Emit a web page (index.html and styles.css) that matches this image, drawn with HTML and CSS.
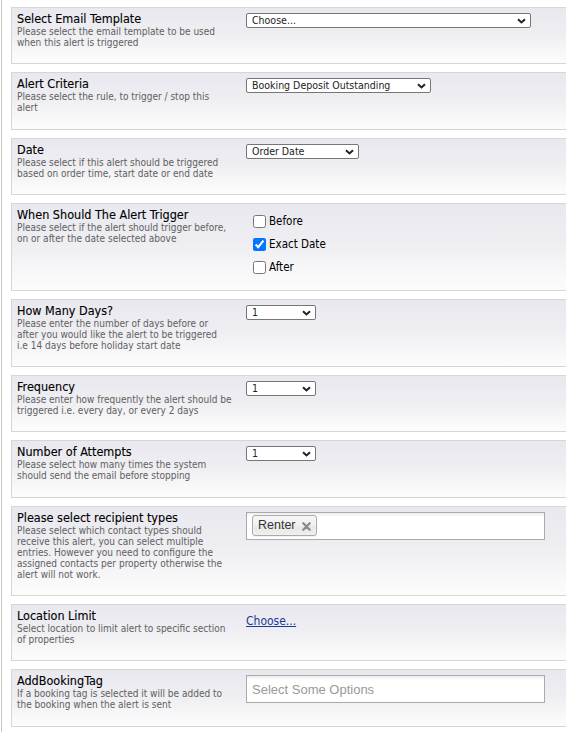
FILE: index.html
```html
<!DOCTYPE html>
<html lang="en">
<head>
<meta charset="utf-8">
<title>Alert Settings</title>
<link rel="stylesheet" href="styles.css">
</head>
<body>
<div class="page">

  <div class="row">
    <div class="info">
      <div class="title">Select Email Template</div>
      <div class="desc">Please select the email template to be used<br>when this alert is triggered</div>
    </div>
    <div class="field">
      <span class="select sel-wide">
        <select><option>Choose...</option></select>
        <svg class="chev" width="9" height="6" viewBox="0 0 9 6"><path d="M1 1.2L4.5 4.5L8 1.2" fill="none" stroke="#222" stroke-width="2"/></svg>
      </span>
    </div>
  </div>

  <div class="row">
    <div class="info">
      <div class="title">Alert Criteria</div>
      <div class="desc">Please select the rule, to trigger / stop this<br>alert</div>
    </div>
    <div class="field">
      <span class="select sel-med">
        <select><option>Booking Deposit Outstanding</option></select>
        <svg class="chev" width="9" height="6" viewBox="0 0 9 6"><path d="M1 1.2L4.5 4.5L8 1.2" fill="none" stroke="#222" stroke-width="2"/></svg>
      </span>
    </div>
  </div>

  <div class="row">
    <div class="info">
      <div class="title">Date</div>
      <div class="desc">Please select if this alert should be triggered<br>based on order time, start date or end date</div>
    </div>
    <div class="field">
      <span class="select sel-date">
        <select><option>Order Date</option></select>
        <svg class="chev" width="9" height="6" viewBox="0 0 9 6"><path d="M1 1.2L4.5 4.5L8 1.2" fill="none" stroke="#222" stroke-width="2"/></svg>
      </span>
    </div>
  </div>

  <div class="row">
    <div class="info">
      <div class="title">When Should The Alert Trigger</div>
      <div class="desc">Please select if the alert should trigger before,<br>on or after the date selected above</div>
    </div>
    <div class="field">
      <ul class="checks">
        <li><label><input type="checkbox">Before</label></li>
        <li><label><input type="checkbox" checked>Exact Date</label></li>
        <li><label><input type="checkbox">After</label></li>
      </ul>
    </div>
  </div>

  <div class="row">
    <div class="info">
      <div class="title">How Many Days?</div>
      <div class="desc">Please enter the number of days before or<br>after you would like the alert to be triggered<br>i.e 14 days before holiday start date</div>
    </div>
    <div class="field">
      <span class="select sel-num">
        <select><option>1</option></select>
        <svg class="chev" width="9" height="6" viewBox="0 0 9 6"><path d="M1 1.2L4.5 4.5L8 1.2" fill="none" stroke="#222" stroke-width="2"/></svg>
      </span>
    </div>
  </div>

  <div class="row">
    <div class="info">
      <div class="title">Frequency</div>
      <div class="desc">Please enter how frequently the alert should be<br>triggered i.e. every day, or every 2 days</div>
    </div>
    <div class="field">
      <span class="select sel-num">
        <select><option>1</option></select>
        <svg class="chev" width="9" height="6" viewBox="0 0 9 6"><path d="M1 1.2L4.5 4.5L8 1.2" fill="none" stroke="#222" stroke-width="2"/></svg>
      </span>
    </div>
  </div>

  <div class="row">
    <div class="info">
      <div class="title">Number of Attempts</div>
      <div class="desc">Please select how many times the system<br>should send the email before stopping</div>
    </div>
    <div class="field">
      <span class="select sel-num">
        <select><option>1</option></select>
        <svg class="chev" width="9" height="6" viewBox="0 0 9 6"><path d="M1 1.2L4.5 4.5L8 1.2" fill="none" stroke="#222" stroke-width="2"/></svg>
      </span>
    </div>
  </div>

  <div class="row">
    <div class="info">
      <div class="title">Please select recipient types</div>
      <div class="desc">Please select which contact types should<br>receive this alert, you can select multiple<br>entries. However you need to configure the<br>assigned contacts per property otherwise the<br>alert will not work.</div>
    </div>
    <div class="field">
      <div class="chosen">
        <span class="choice">Renter<svg class="x" width="9" height="9" viewBox="0 0 9 9"><path d="M1.3 1.3L7.7 7.7M7.7 1.3L1.3 7.7" stroke="#8a8a8a" stroke-width="2.3" stroke-linecap="round"/></svg></span>
      </div>
    </div>
  </div>

  <div class="row">
    <div class="info">
      <div class="title">Location Limit</div>
      <div class="desc">Select location to limit alert to specific section<br>of properties</div>
    </div>
    <div class="field">
      <a class="link" href="#">Choose...</a>
    </div>
  </div>

  <div class="row">
    <div class="info">
      <div class="title">AddBookingTag</div>
      <div class="desc">If a booking tag is selected it will be added to<br>the booking when the alert is sent</div>
    </div>
    <div class="field">
      <div class="chosen">
        <span class="placeholder">Select Some Options</span>
      </div>
    </div>
  </div>

</div>
</body>
</html>
```

FILE: styles.css
```css
html, body {
  margin: 0;
  padding: 0;
  background: #fff;
  overflow: hidden;
}

body {
  font-family: "DejaVu Sans Condensed", "DejaVu Sans", sans-serif;
  font-stretch: condensed;
}

.page {
  margin-left: 1px;
  border-left: 1px solid #c9c9c9;
  padding: 7px 0 8px 9px;
  min-height: 732px;
  box-sizing: border-box;
  overflow: hidden;
}

.row {
  width: 600px;
  box-sizing: border-box;
  display: grid;
  grid-template-columns: 224px 1fr;
  column-gap: 5px;
  padding: 4px 5px 0;
  margin-bottom: 8px;
  border: 1px solid #d6d6d6;
  background: linear-gradient(to bottom, #e8e8ef 0%, #eeeef2 45%, #f9f9fa 85%, #fcfcfc 100%);
}

.info {
  padding-bottom: 15.3px;
  white-space: nowrap;
}

.title {
  font-size: 12.5px;
  line-height: 14px;
  color: #000;
  -webkit-text-stroke: 0.12px #000;
}

.desc {
  font-size: 10px;
  line-height: 11px;
  color: #606060;
}

.field {
  padding-top: 1px;
}

.select {
  position: relative;
  display: inline-block;
  vertical-align: top;
}

.select select {
  appearance: none;
  -webkit-appearance: none;
  display: block;
  width: 100%;
  height: 15px;
  box-sizing: border-box;
  margin: 0;
  padding: 0 16px 0 5px;
  border: 1px solid #767676;
  border-radius: 2px;
  background: #fff;
  font-family: "DejaVu Sans Condensed", "DejaVu Sans", sans-serif;
  font-stretch: condensed;
  font-size: 10.5px;
  line-height: 13px;
  color: #222;
}

.select .chev {
  position: absolute;
  right: 5px;
  top: 5px;
  pointer-events: none;
}

.sel-wide { width: 285px; }
.sel-med { width: 185px; }
.sel-date { width: 113px; }
.sel-num { width: 70px; }

.checks {
  list-style: none;
  margin: 1px 0 0;
  padding: 0 0 11px 3px;
}

.checks li {
  height: 23px;
  display: flex;
  align-items: center;
}

.checks label {
  display: flex;
  align-items: center;
  font-size: 11.5px;
  color: #000;
}

.checks input {
  width: 13px;
  height: 13px;
  margin: 0 3px 0 4px;
}

.chosen {
  width: 299px;
  height: 28px;
  box-sizing: border-box;
  border: 1px solid #aaa;
  background: linear-gradient(#eee 1%, #fff 15%);
  display: flex;
  align-items: center;
  padding: 0 5px;
  font-family: "Liberation Sans", Arial, sans-serif;
  font-stretch: normal;
}

.choice {
  position: relative;
  padding: 3px 20px 3px 5px;
  line-height: 13px;
  font-size: 12.5px;
  color: #333;
  border: 1px solid #aaa;
  border-radius: 3px;
  background: linear-gradient(#f4f4f4 20%, #f0f0f0 50%, #e8e8e8 52%, #eee 100%);
  box-shadow: inset 0 0 2px #fff, 0 1px 0 rgba(0, 0, 0, 0.05);
}

.choice .x {
  position: absolute;
  right: 5px;
  top: 6px;
}

.placeholder {
  color: #999;
  font-size: 13px;
}

.link {
  font-size: 12px;
  line-height: 14px;
  color: #1a3a9a;
  text-decoration: underline;
}
```
